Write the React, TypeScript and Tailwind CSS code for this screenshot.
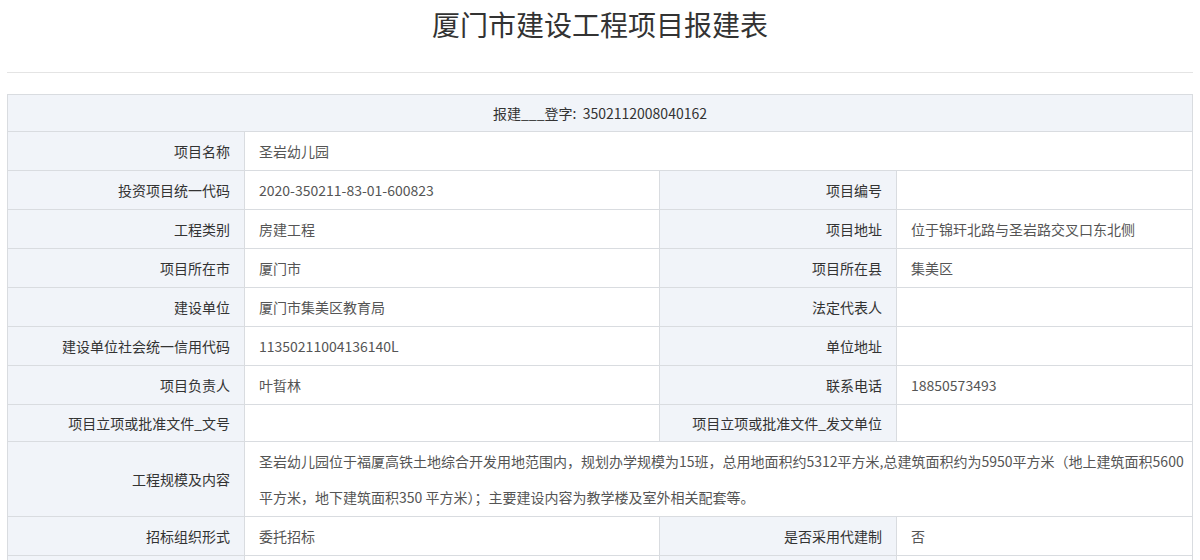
const rows: [string, string, string?, string?][] = [
  ["投资项目统一代码", "2020-350211-83-01-600823", "项目编号", ""],
  ["工程类别", "房建工程", "项目地址", "位于锦玕北路与圣岩路交叉口东北侧"],
  ["项目所在市", "厦门市", "项目所在县", "集美区"],
  ["建设单位", "厦门市集美区教育局", "法定代表人", ""],
  ["建设单位社会统一信用代码", "11350211004136140L", "单位地址", ""],
  ["项目负责人", "叶晢林", "联系电话", "18850573493"],
  ["项目立项或批准文件_文号", "", "项目立项或批准文件_发文单位", ""],
];

const th = "bg-[#f1f4f9] border border-[#d9dce0] text-right pr-[14px] text-[#333] font-normal";
const td = "border border-[#d9dce0] text-left pl-[14px] text-[#555]";

export default function App() {
  return (
    <div className="bg-white min-h-[560px] text-[14px]" style={{ fontFamily: '"Microsoft YaHei","Noto Sans CJK SC",sans-serif' }}>
      <h1 className="text-center text-[28px] text-[#333] pt-[5px] h-[72px] leading-[38px]">厦门市建设工程项目报建表</h1>
      <div className="mx-[7px] border-t border-[#e4e4e4]" />
      <div className="px-[7px] pt-[21px]">
        <table className="w-full border-collapse table-fixed">
          <colgroup>
            <col className="w-[237px]" />
            <col className="w-[415px]" />
            <col className="w-[237px]" />
            <col />
          </colgroup>
          <tbody>
            <tr className="h-[37px]">
              <td colSpan={4} className="bg-[#f1f4f9] border border-[#d9dce0] text-center text-[#333]">报建___登字:&nbsp;&nbsp;3502112008040162</td>
            </tr>
            <tr className="h-[39px]">
              <td className={th}>项目名称</td>
              <td colSpan={3} className={td}>圣岩幼儿园</td>
            </tr>
            {rows.map((r, i) => (
              <tr key={i} className={i === 6 ? "h-[37px]" : "h-[39px]"}>
                <td className={th}>{r[0]}</td>
                <td className={td}>{r[1]}</td>
                <td className={th}>{r[2]}</td>
                <td className={td}>{r[3]}</td>
              </tr>
            ))}
            <tr>
              <td className={th}>工程规模及内容</td>
              <td colSpan={3} className={td + " leading-[36px] py-[1px] pr-[8px]"}>
                圣岩幼儿园位于福厦高铁土地综合开发用地范围内，规划办学规模为15班，总用地面积约5312平方米,总建筑面积约为5950平方米（地上建筑面积5600平方米，地下建筑面积350 平方米）；主要建设内容为教学楼及室外相关配套等。
              </td>
            </tr>
            <tr className="h-[39px]">
              <td className={th}>招标组织形式</td>
              <td className={td}>委托招标</td>
              <td className={th}>是否采用代建制</td>
              <td className={td}>否</td>
            </tr>
            <tr className="h-[39px]">
              <td className={th}></td>
              <td className={td}></td>
              <td className={th}></td>
              <td className={td}></td>
            </tr>
          </tbody>
        </table>
      </div>
    </div>
  );
}
